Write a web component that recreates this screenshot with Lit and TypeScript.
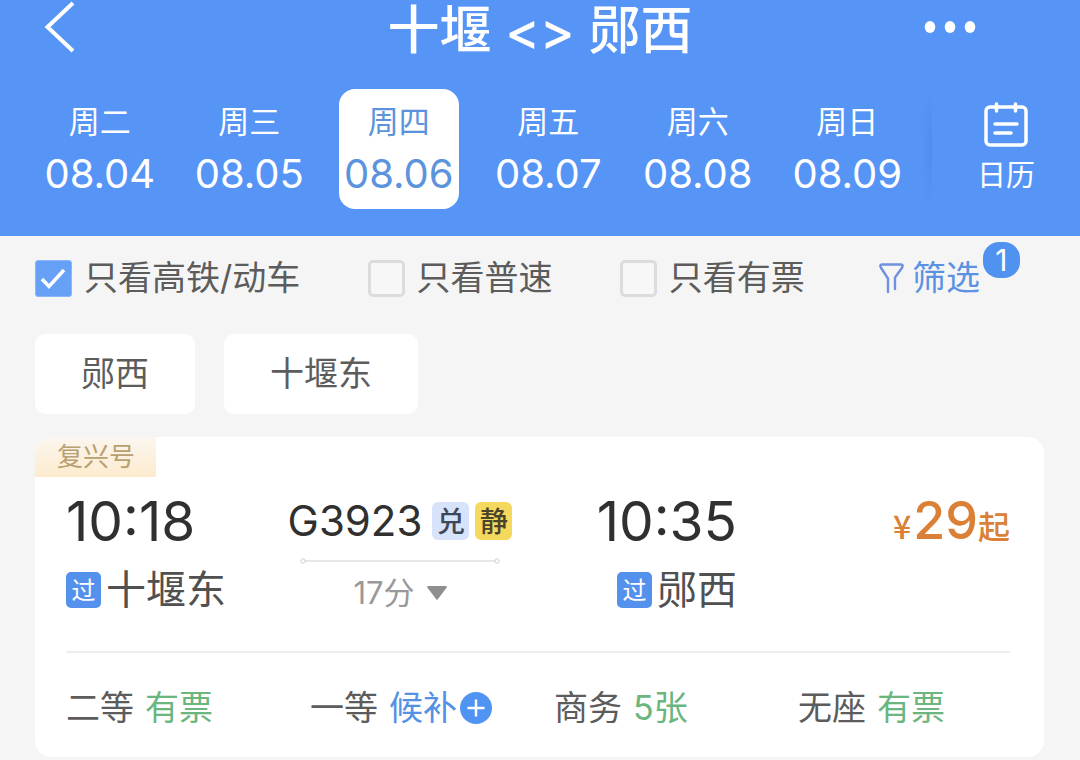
import { LitElement, html, css, svg } from "lit";
import { customElement, property, state } from "lit/decorators.js";
import { classMap } from "lit/directives/class-map.js";

const reset = css`
  *, *::before, *::after { box-sizing: border-box; }
  button { font: inherit; color: inherit; background: none; border: 0; padding: 0; margin: 0; cursor: pointer; }
  svg { display: block; }
`;

const DAYS = [
  { week: "周二", date: "08.04" },
  { week: "周三", date: "08.05" },
  { week: "周四", date: "08.06" },
  { week: "周五", date: "08.07" },
  { week: "周六", date: "08.08" },
  { week: "周日", date: "08.09" },
];

interface Seat { name: string; stock: string; waitlist?: boolean; }

const SEATS: Seat[] = [
  { name: "二等", stock: "有票" },
  { name: "一等", stock: "候补", waitlist: true },
  { name: "商务", stock: "5张" },
  { name: "无座", stock: "有票" },
];

@customElement("route-header")
class RouteHeader extends LitElement {
  @state() selected = "08.06";

  static styles = [reset, css`
    :host { display: block; background: #5695f6; color: #fff; }
    .bar { display: grid; grid-template-columns: 1fr auto 1fr; align-items: start; height: 60px; padding: 0 104px 0 44px; }
    .title { margin: 0; grid-column: 2; font-size: 52px; font-weight: 500; line-height: 62px; white-space: nowrap; padding-left: 60px; }
    .back, .more { height: 54px; }
    .more { justify-self: end; }
    .dates { display: flex; height: 176px; padding-top: 29px; }
    .days { flex: 1; display: grid; grid-template-columns: repeat(6, 1fr); justify-items: center; align-items: start; padding-left: 25px; }
    .day { width: 120px; height: 120px; border-radius: 16px; display: flex; flex-direction: column; align-items: center; padding-top: 14px; }
    .week { font-size: 31px; line-height: 38px; }
    .date { font-size: 40px; line-height: 66px; }
    .day.active { background: #fff; color: #5b93dc; }
    .shade { width: 10px; height: 120px; background: linear-gradient(90deg, rgba(60, 110, 225, 0), rgba(60, 110, 225, 0.22)); -webkit-mask-image: linear-gradient(transparent, #000 40%, #000 60%, transparent); mask-image: linear-gradient(transparent, #000 40%, #000 60%, transparent); }
    .calendar { width: 148px; height: 120px; display: flex; flex-direction: column; align-items: center; padding-top: 13px; font-size: 29px; line-height: 40px; gap: 8px; }
  `];

  render() {
    return html`
      <div class="bar">
        <button class="back" aria-label="返回">
          <svg width="32" height="54" viewBox="0 0 32 54" fill="none" stroke="#fff" stroke-width="4"><path d="M29 3 3.500 27 29 51"/></svg>
        </button>
        <h1 class="title">十堰 &lt;&gt; 郧西</h1>
        <button class="more" aria-label="更多">
          <svg width="52" height="14" viewBox="0 0 52 14" fill="#fff"><ellipse cx="6" cy="7" rx="5.300" ry="6"/><ellipse cx="26" cy="7" rx="5.300" ry="6"/><ellipse cx="46" cy="7" rx="5.300" ry="6"/></svg>
        </button>
      </div>
      <div class="dates">
        <div class="days">
          ${DAYS.map((d) => html`
            <button class=${classMap({ day: true, active: d.date === this.selected })} @click=${() => (this.selected = d.date)}>
              <span class="week">${d.week}</span><span class="date">${d.date}</span>
            </button>`)}
        </div>
        <div class="shade"></div>
        <button class="calendar">
          <svg width="44" height="46" viewBox="0 0 44 46" fill="none" stroke="#fff" stroke-width="3.500" stroke-linecap="round">
            <rect x="2" y="5" width="40" height="38" rx="4"/>
            <path d="M12.500 2v7M31.500 2v7M11 22h22M11 31h16"/>
          </svg>
          <span>日历</span>
        </button>
      </div>`;
  }
}

@customElement("filter-check")
class FilterCheck extends LitElement {
  @property() label = "";
  @property({ type: Boolean }) checked = false;

  static styles = [reset, css`
    :host { display: block; }
    .field { display: flex; align-items: center; gap: 12px; font-size: 34px; line-height: 48px; color: #5c5c5c; white-space: nowrap; cursor: pointer; }
    .box { display: grid; width: 37px; height: 37px; }
    .input, .tick { grid-area: 1 / 1; width: 37px; height: 37px; }
    .input { appearance: none; margin: 0; border: 3px solid #dcdcdc; border-radius: 5px; background: #f7f7f7; }
    .input:checked { background: #66a0f7; border: 1px solid #8ab8fa; border-radius: 3px; }
    .tick { visibility: hidden; pointer-events: none; }
    .input:checked + .tick { visibility: visible; }
  `];

  render() {
    return html`
      <label class="field">
        <span class="box">
          <input class="input" type="checkbox" .checked=${this.checked}>
          <svg class="tick" viewBox="0 0 37 37" fill="none" stroke="#fff" stroke-width="3.500"><path d="M7 19 14 26.500 29 10"/></svg>
        </span>
        <span>${this.label}</span>
      </label>`;
  }
}

@customElement("train-card")
class TrainCard extends LitElement {
  static styles = [reset, css`
    :host { display: block; background: #fff; border-radius: 16px; overflow: hidden; }
    .tag { display: block; width: max-content; padding: 0 21px 0 22px; font-size: 26px; line-height: 40px; color: #b8a070; background: linear-gradient(#fbf6f0, #fdebce); }
    .body { padding: 0 34px 25px 31px; }
    .trip { display: grid; grid-template-columns: 221fr 226fr 224fr 273fr; padding: 12px 0 24px; border-bottom: 2px solid #eee; white-space: nowrap; }
    .stop { display: flex; flex-direction: column; }
    .arrive { align-items: flex-end; }
    .time { font-size: 55px; line-height: 64px; color: #303030; }
    .station { display: flex; align-items: center; gap: 5px; font-size: 40px; line-height: 74px; color: #505050; }
    .pass { width: 35px; height: 36px; border-radius: 5px; background: #5491ec; color: #fff; font-size: 24px; line-height: 37px; text-align: center; }
    .service { display: flex; flex-direction: column; align-items: center; }
    .number { display: flex; align-items: center; font-size: 42px; line-height: 64px; color: #303030; gap: 6px; }
    .code { margin-right: 4px; }
    .mark { width: 37px; height: 38px; border-radius: 6px; font-size: 28px; line-height: 40px; font-weight: 500; text-align: center; color: #3f4858; background: #d7e3fa; }
    .quiet { background: #f4d95e; color: #4c4428; }
    .link { margin-top: 5px; }
    .duration { display: flex; align-items: center; gap: 12px; font-size: 31px; line-height: 40px; color: #999; margin-top: 9px; }
    .price { color: #da8037; display: flex; align-items: baseline; justify-content: flex-end; line-height: 64px; height: 64px; font-size: 32px; font-weight: 500; }
    .amount { font-size: 52px; line-height: 64px; }
    .yen { font-family: "Noto Sans CJK SC", sans-serif; margin-right: 2px; }
    .seats { display: grid; grid-template-columns: repeat(4, 1fr); column-gap: 32px; padding-top: 31px; font-size: 34px; line-height: 48px; color: #5c5c5c; white-space: nowrap; }
    .seat { display: flex; align-items: center; gap: 11px; text-align: left; }
    .stock { display: flex; align-items: center; gap: 3px; color: #6bb57e; }
    .waitlist { color: #5491e6; }
  `];

  render() {
    return html`
      <span class="tag">复兴号</span>
      <div class="body">
        <div class="trip">
          <div class="stop">
            <span class="time">10:18</span>
            <span class="station"><span class="pass">过</span>十堰东</span>
          </div>
          <div class="service">
            <span class="number"><span class="code">G3923</span><span class="mark">兑</span><span class="mark quiet">静</span></span>
            <svg class="link" width="200" height="6" viewBox="0 0 200 6" fill="none" stroke="#cfcfcf"><path d="M5 3h190"/><circle cx="3" cy="3" r="2.200"/><circle cx="197" cy="3" r="2.200"/></svg>
            <button class="duration"><span>17分</span>
              <svg width="20" height="14" viewBox="0 0 20 14" fill="#8e8e8e"><path d="M1 0h18a1 1 0 0 1 .700 1.600L10.800 13.300a1 1 0 0 1-1.600 0L.300 1.600A1 1 0 0 1 1 0z"/></svg>
            </button>
          </div>
          <div class="stop arrive">
            <span class="time">10:35</span>
            <span class="station"><span class="pass">过</span>郧西</span>
          </div>
          <div class="price"><span class="yen">¥</span><span class="amount">29</span><span>起</span></div>
        </div>
        <div class="seats">
          ${SEATS.map((s) => html`
            <button class="seat"><span>${s.name}</span>
              <span class=${classMap({ stock: true, waitlist: !!s.waitlist })}>${s.stock}
                ${s.waitlist ? html`<svg width="32" height="32" viewBox="0 0 32 32">${svg`<circle cx="16" cy="16" r="16" fill="#4f93f3"/><path d="M16 7.500v17M7.500 16h17" stroke="#fff" stroke-width="2.500"/>`}</svg>` : ""}
              </span>
            </button>`)}
        </div>
      </div>`;
  }
}

@customElement("app-root")
class AppRoot extends LitElement {
  static styles = [reset, css`
    :host { display: block; min-height: 100vh; background: #f5f5f5; font-family: Inter, "Noto Sans CJK SC", sans-serif; }
    .content { padding: 18px 36px 2px 35px; }
    .filters { display: flex; justify-content: space-between; align-items: center; padding-right: 64px; }
    .filter { position: relative; display: flex; align-items: center; gap: 8px; padding-left: 7px; color: #5b93e2; font-size: 34px; line-height: 48px; white-space: nowrap; }
    .count { position: absolute; top: -12px; right: -40px; width: 37px; height: 36px; border-radius: 16px; background: #4f92f0; color: #fff; font-size: 30px; line-height: 36px; text-align: center; }
    .stations { display: flex; gap: 29px; padding: 32px 0 23px; }
    .chip { height: 80px; padding: 0 46px; border-radius: 10px; background: #fff; color: #5c5c5c; font-size: 34px; line-height: 80px; }
  `];

  render() {
    return html`
      <route-header></route-header>
      <main class="content">
        <div class="filters">
          <filter-check label="只看高铁/动车" checked></filter-check>
          <filter-check label="只看普速"></filter-check>
          <filter-check label="只看有票"></filter-check>
          <button class="filter">
            <svg width="25" height="32" viewBox="0 0 25 32" fill="none" stroke="#7090e0" stroke-width="2.400" stroke-linecap="round" stroke-linejoin="round"><path d="M9 30V16.500L1.800 5.500Q.500 2.500 3 2.500h19q2.500 0 1.200 3L16 15.500v11.500"/></svg>
            <span>筛选</span><span class="count">1</span>
          </button>
        </div>
        <div class="stations">
          <button class="chip">郧西</button>
          <button class="chip">十堰东</button>
        </div>
        <train-card></train-card>
      </main>`;
  }
}
